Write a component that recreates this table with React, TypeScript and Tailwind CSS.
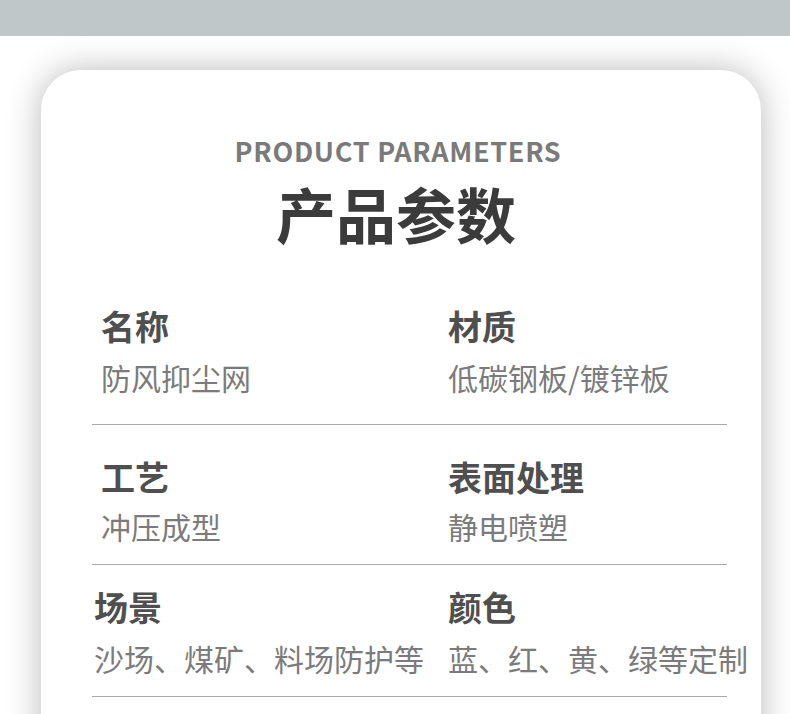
const font = { fontFamily: '"Noto Sans CJK SC", "Noto Sans", sans-serif' };

interface IParam {
  label: string;
  value: string;
}

interface IRowProps {
  left: IParam;
  right: IParam;
  rowClass: string;
  gapClass: string;
  leftPad: string;
}

function ParamRow(props: IRowProps) {
  const { left, right, rowClass, gapClass, leftPad } = props;
  return (
    <div className={`grid grid-cols-[356px_1fr] border-b border-[#ababab] ${rowClass}`}>
      {[left, right].map((item, i) => (
        <div key={item.label} className={`flex flex-col ${gapClass} ${i === 0 ? leftPad : "pl-0"}`}>
          <span className="text-[34px] leading-none font-bold text-[#4f4f4f] whitespace-nowrap">
            {item.label}
          </span>
          <span className="text-[30px] leading-none font-normal text-[#7b7b7b] whitespace-nowrap">
            {item.value}
          </span>
        </div>
      ))}
    </div>
  );
}

export default function App() {
  return (
    <div className="w-[790px] h-[714px] bg-white overflow-hidden" style={font}>
      <div className="h-[36px] bg-[#bfc7c9]" />
      <div className="mt-[34px] ml-[41px] w-[720px] h-[720px] bg-white rounded-[40px] shadow-[0_0_34px_rgba(0,0,0,0.28)] pt-[67px]">
        <div className="flex flex-col items-center pr-[10px]">
          <span className="pl-[4px] text-[27px] leading-none font-bold text-[#7a7a7a] tracking-[0.7px]">
            PRODUCT PARAMETERS
          </span>
          <span className="mt-[19px] text-[60px] leading-none font-bold text-[#3b3b3b]">
            产品参数
          </span>
        </div>
        <div className="ml-[51px] w-[635px] mt-[66px]">
          <ParamRow
            left={{ label: "名称", value: "防风抑尘网" }}
            right={{ label: "材质", value: "低碳钢板/镀锌板" }}
            rowClass="pb-[32px]"
            gapClass="gap-[19px]"
            leftPad="pl-[9px]"
          />
          <ParamRow
            left={{ label: "工艺", value: "冲压成型" }}
            right={{ label: "表面处理", value: "静电喷塑" }}
            rowClass="pt-[35px] pb-[23px]"
            gapClass="gap-[17px]"
            leftPad="pl-[9px]"
          />
          <ParamRow
            left={{ label: "场景", value: "沙场、煤矿、料场防护等" }}
            right={{ label: "颜色", value: "蓝、红、黄、绿等定制" }}
            rowClass="pt-[25px] pb-[23px]"
            gapClass="gap-[19px]"
            leftPad="pl-[2px]"
          />
        </div>
      </div>
    </div>
  );
}
